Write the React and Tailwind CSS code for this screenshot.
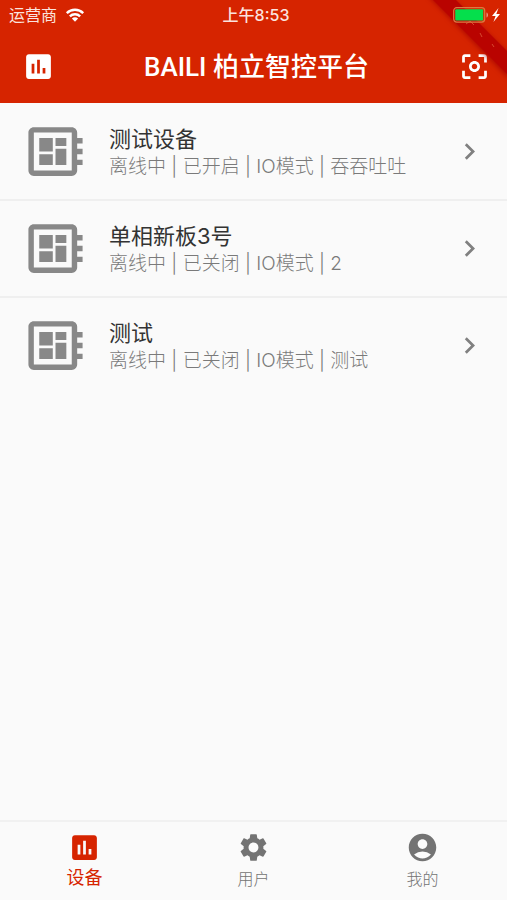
import { Fragment, useState } from "react";
import {
  MdAccountCircle,
  MdAssessment,
  MdCenterFocusWeak,
  MdDeveloperBoard,
  MdKeyboardArrowRight,
  MdSettings,
} from "react-icons/md";

const devices = [
  { name: "测试设备", status: "离线中 | 已开启 | IO模式 | 吞吞吐吐" },
  { name: "单相新板3号", status: "离线中 | 已关闭 | IO模式 | 2" },
  { name: "测试", status: "离线中 | 已关闭 | IO模式 | 测试" },
];

const tabs = [
  { label: "设备", icon: MdAssessment },
  { label: "用户", icon: MdSettings },
  { label: "我的", icon: MdAccountCircle },
];

function StatusBar() {
  return (
    <div className="grid h-[30px] grid-cols-3 items-center pl-[9px] pr-1 text-base text-[#fbe3df]">
      <div className="flex items-center gap-2">
        <span>运营商</span>
        <svg width="20" height="14" viewBox="0 0 20 15" fill="none" stroke="white" strokeWidth="2.6">
          <path d="M1.2 5.4a12.6 12.6 0 0 1 17.6 0" />
          <path d="M4.5 9a7.8 7.8 0 0 1 11 0" />
          <path d="M10 14.6l-3.3-3.4a4.7 4.7 0 0 1 6.6 0z" fill="white" stroke="none" />
        </svg>
      </div>
      <span className="text-center font-medium">上午8:53</span>
      <div className="relative z-10 flex justify-end">
        <svg width="50" height="16" viewBox="0 0 50 16" fill="none">
          <rect x="0.7" y="0.7" width="31" height="14.4" rx="3" stroke="#dc7a42" strokeWidth="1.2" />
          <rect x="2.2" y="2.2" width="28" height="11.4" rx="1" fill="#05df4c" />
          <path d="M33.5 5.5c2 .6 2 4.4 0 5z" fill="#e79a80" />
          <path d="M45.5 1L39 9h3.6l-2.2 6L47 7h-3.7z" fill="white" />
        </svg>
      </div>
    </div>
  );
}

function CornerRibbon() {
  return (
    <svg className="pointer-events-none absolute right-0 top-0" width="87" height="96" viewBox="0 0 87 96">
      <defs>
        <filter id="ribbon-shadow" x="-20%" y="-20%" width="140%" height="140%">
          <feGaussianBlur stdDeviation="2.5" />
        </filter>
      </defs>
      <path d="M8 -4L89 79V54L30 -4z" fill="#a30000" opacity="0.7" filter="url(#ribbon-shadow)" />
      <path d="M11 -2L89 76V53L34 -2z" fill="#b90300" />
      <path d="M46 24l4-3 4 4M60 33l2 4M72 44l2 3" fill="none" stroke="#d64a30" strokeWidth="1" />
    </svg>
  );
}

function Header() {
  return (
    <header className="relative bg-[#d62400] text-white">
      <StatusBar />
      <div className="grid h-[73px] grid-cols-[1fr_auto_1fr] items-center pb-px pl-[22px] pr-4">
        <button aria-label="统计" className="justify-self-start">
          <MdAssessment size={33} />
        </button>
        <h1 className="pt-0.5 font-['Roboto','Noto_Sans_CJK_SC',sans-serif] text-[26px] font-medium leading-8">
          BAILI 柏立智控平台
        </h1>
        <button aria-label="扫描" className="justify-self-end">
          <MdCenterFocusWeak size={33} />
        </button>
      </div>
      <CornerRibbon />
    </header>
  );
}

function DeviceRow({ device }) {
  return (
    <a href="#device" className="flex h-[95px] items-center pl-[23px] pr-[21px]">
      <MdDeveloperBoard size={65} className="shrink-0 text-[#888888]" />
      <div className="ml-[21px] min-w-0 flex-1 pt-[3px]">
        <div className="text-[22px] leading-7 text-[#333333]">{device.name}</div>
        <div className="text-[19px] font-light leading-7 text-[#7a7a7a]">{device.status}</div>
      </div>
      <MdKeyboardArrowRight size={33} className="shrink-0 text-[#808080]" />
    </a>
  );
}

export default function App() {
  const [active, setActive] = useState(0);

  return (
    <div className="flex min-h-screen flex-col bg-[#fafafa] font-['Inter','Noto_Sans_CJK_SC',sans-serif]">
      <Header />

      <main className="flex-1 pt-px">
        {devices.map((device, i) => (
          <Fragment key={device.name}>
            {i > 0 && <hr className="h-0.5 border-0 bg-[#efefef]" />}
            <DeviceRow device={device} />
          </Fragment>
        ))}
      </main>

      <nav className="grid h-20 grid-cols-3 border-t-2 border-[#f1f1f1]">
        {tabs.map(({ label, icon: Icon }, i) => (
          <button
            key={label}
            onClick={() => setActive(i)}
            className={`flex flex-col items-center pt-[9px] ${i === active ? "text-[#d62400]" : "text-[#737373]"}`}
          >
            <Icon size={33} />
            <span className={i === active ? "text-lg leading-7" : "text-base font-light leading-[30px]"}>{label}</span>
          </button>
        ))}
      </nav>
    </div>
  );
}
